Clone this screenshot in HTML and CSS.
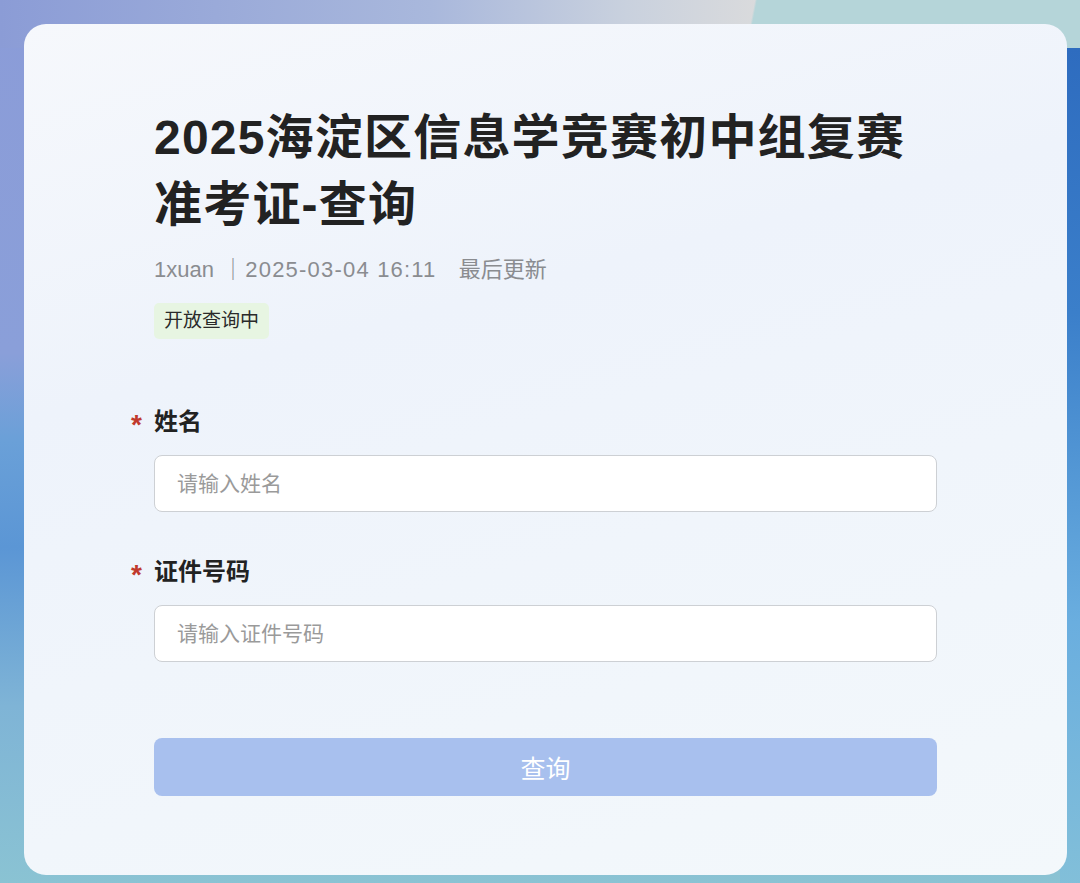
FILE: index.html
```html
<!DOCTYPE html>
<html lang="zh-CN">
<head>
    <meta charset="UTF-8">
    <meta name="viewport" content="width=device-width, initial-scale=1.0">
    <title>2025海淀区信息学竞赛初中组复赛准考证-查询</title>
    <link rel="stylesheet" href="styles.css">
</head>
<body>
    <div class="card">
        <h1 class="title">2025海淀区信息学竞赛初中组复赛<br>准考证-查询</h1>
        <div class="meta">
            <span>1xuan</span>
            <span class="sep">｜2025-03-04 16:11</span>
            <span class="updated">最后更新</span>
        </div>
        <span class="badge">开放查询中</span>

        <form class="query-form" onsubmit="return false;">
            <label class="field-label" for="name"><span class="star">*</span>姓名</label>
            <input class="field-input" type="text" id="name" name="name" placeholder="请输入姓名">

            <label class="field-label second" for="idno"><span class="star">*</span>证件号码</label>
            <input class="field-input" type="text" id="idno" name="idno" placeholder="请输入证件号码">

            <button class="submit-btn" type="submit">查询</button>
        </form>
    </div>
</body>
</html>
```

FILE: styles.css
```css
body {
    margin: 0;
    min-height: 883px;
    font-family: "Liberation Sans", "Noto Sans CJK SC", sans-serif;
    background:
        linear-gradient(101deg, transparent 69.3%, #b5d5d9 69.5%) left top / 100% 48px no-repeat,
        linear-gradient(90deg, #8b9cd6 0%, #a9b8dc 40%, #c9d1de 58%, #dcdcdc 72%) left top / 100% 48px no-repeat,
        linear-gradient(180deg, #2e6cbf 0%, #3b7fca 30%, #6aaedf 65%, #86c2d8 100%) right top 48px / 20px 100% no-repeat,
        linear-gradient(180deg, #8b9cd8 0%, #8a9fd9 40%, #6aa0d8 50%, #5b96d5 62%, #7fb4d6 80%, #8ac3d3 100%);
    overflow: hidden;
}
.card {
    box-sizing: border-box;
    width: 1043px;
    margin: 24px 0 0 24px;
    padding: 80px 130px 79px 130px;
    border-radius: 22px;
    background: linear-gradient(165deg, #f6f8fc 0%, #eef3fb 35%, #f0f5fb 60%, #f3f8fb 100%);
    color: #222;
}
.title {
    margin: 0;
    font-size: 48px;
    line-height: 67px;
    font-weight: 700;
    color: #222;
    letter-spacing: 1.2px;
}
.meta {
    margin-top: 17px;
    font-size: 22px;
    line-height: 30px;
    color: #8a8c90;
}
.meta .sep {
    margin-left: 2px;
    letter-spacing: 1.2px;
}
.meta .updated {
    margin-left: 16px;
}
.badge {
    display: block;
    width: fit-content;
    margin-top: 18px;
    padding: 0 10px;
    height: 36px;
    line-height: 36px;
    font-size: 19px;
    color: #2a2a2a;
    background-color: #e7f5e2;
    border-radius: 5px;
}
.query-form {
    display: flex;
    flex-direction: column;
    margin-top: 66px;
}
.field-label {
    display: flex;
    align-items: flex-start;
    gap: 9px;
    margin-left: -23px;
    margin-bottom: 16px;
    height: 34px;
    font-size: 24px;
    line-height: 34px;
    font-weight: 700;
    color: #222;
}
.field-label.second {
    margin-top: 43px;
}
.star {
    box-sizing: border-box;
    width: 14px;
    height: 34px;
    padding-top: 6px;
    font-size: 28px;
    line-height: 28px;
    color: #c0392b;
    font-weight: 700;
}
.field-input {
    box-sizing: border-box;
    width: 100%;
    height: 57px;
    padding: 0 22px;
    font-family: inherit;
    font-size: 21px;
    color: #333;
    background-color: #fff;
    border: 1.5px solid #cdd0d4;
    border-radius: 8px;
    outline: none;
}
.field-input::placeholder {
    color: #9a9a9a;
}
.submit-btn {
    margin-top: 76px;
    height: 58px;
    width: 100%;
    font-family: inherit;
    font-size: 25px;
    color: #fff;
    background-color: #a8c0ee;
    border: none;
    border-radius: 8px;
    cursor: pointer;
}
```
